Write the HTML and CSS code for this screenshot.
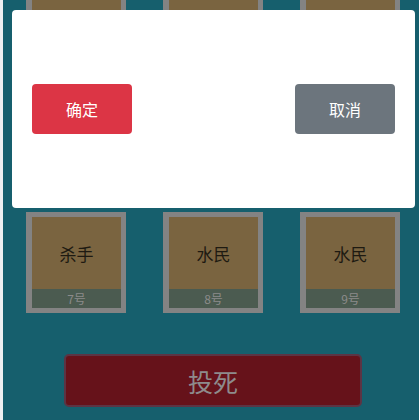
FILE: index.html
```html
<!DOCTYPE html>
<html lang="zh">
<head>
<meta charset="utf-8">
<link rel="stylesheet" href="styles.css">
</head>
<body>
<div class="page">
  <div class="grid">
    <div class="card"><div class="role">水民</div><div class="num">1号</div></div>
    <div class="card"><div class="role">水民</div><div class="num">2号</div></div>
    <div class="card"><div class="role">水民</div><div class="num">3号</div></div>
    <div class="card"><div class="role">水民</div><div class="num">4号</div></div>
    <div class="card"><div class="role">水民</div><div class="num">5号</div></div>
    <div class="card"><div class="role">水民</div><div class="num">6号</div></div>
    <div class="card"><div class="role">杀手</div><div class="num">7号</div></div>
    <div class="card"><div class="role">水民</div><div class="num">8号</div></div>
    <div class="card"><div class="role">水民</div><div class="num">9号</div></div>
  </div>
  <div class="action"><button class="kill">投死</button></div>
</div>
<div class="modal">
  <button class="btn ok">确定</button>
  <button class="btn cancel">取消</button>
</div>
</body>
</html>
```
FILE: styles.css
```css
html, body {
  margin: 0;
  padding: 0;
  height: 100%;
  overflow: hidden;
  background: #eef0f1;
  font-family: "Noto Sans CJK SC", "Noto Sans", sans-serif;
}
.page {
  margin-left: 3px;
  height: 100%;
  background: #165f6d;
  overflow: hidden;
}
.grid {
  margin-top: -10px;
  display: grid;
  grid-template-columns: repeat(3, 100px);
  column-gap: 37px;
  row-gap: 10px;
  padding-left: 23px;
}
.card {
  box-sizing: border-box;
  width: 100px;
  height: 101px;
  border: 5px solid #838383;
  border-left-width: 6px;
  display: flex;
  flex-direction: column;
  background: #7a6440;
}
.role {
  flex: 1;
  display: flex;
  align-items: center;
  justify-content: center;
  font-size: 17px;
  color: #1e1a12;
}
.num {
  height: 19px;
  background: #4b5b50;
  color: #8b8b8b;
  font-size: 12px;
  line-height: 19px;
  text-align: center;
}
.action {
  display: flex;
  justify-content: center;
  padding-top: 41px;
  padding-left: 4px;
}
.kill {
  box-sizing: border-box;
  width: 298px;
  height: 53px;
  background: #66121a;
  border: 2px solid #5c3444;
  border-radius: 5px;
  color: #8e8b8c;
  font-family: inherit;
  font-size: 25px;
}
.modal {
  position: absolute;
  left: 12px;
  top: 10px;
  width: 403px;
  height: 198px;
  background: #fff;
  border-radius: 4px;
  box-sizing: border-box;
  padding: 0 20px;
  display: flex;
  align-items: center;
  justify-content: space-between;
}
.btn {
  width: 100px;
  height: 50px;
  border: none;
  border-radius: 4px;
  color: #fff;
  font-family: inherit;
  font-size: 16px;
}
.ok { background: #dc3545; }
.cancel { background: #6c757d; }
```
